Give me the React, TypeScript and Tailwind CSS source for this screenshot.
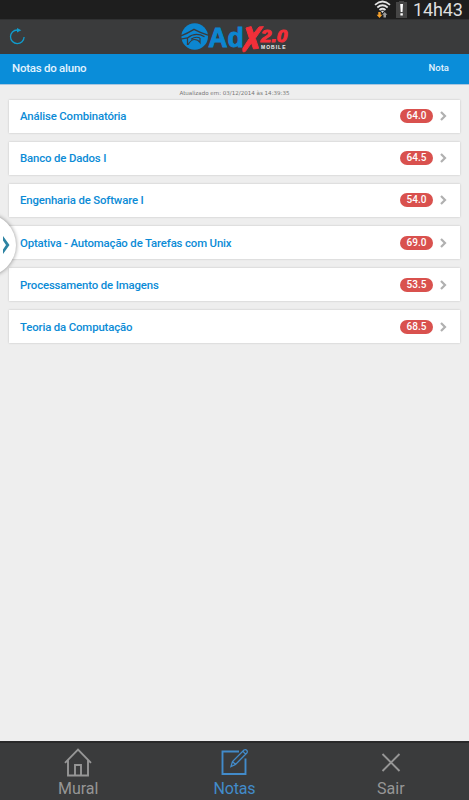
import React from "react";

const grades = [
  { name: "Análise Combinatória", grade: "64.0" },
  { name: "Banco de Dados I", grade: "64.5" },
  { name: "Engenharia de Software I", grade: "54.0" },
  { name: "Optativa - Automação de Tarefas com Unix", grade: "69.0" },
  { name: "Processamento de Imagens", grade: "53.5" },
  { name: "Teoria da Computação", grade: "68.5" },
];

function StatusBar() {
  return (
    <div className="flex h-[19px] shrink-0 items-center justify-end bg-[#1e1e1e] pr-2">
      <svg className="h-[19px] w-[18px]" viewBox="-0.500 0 18 19" fill="none">
        <path d="M1.500 4.800Q9-1.800 16.500 4.800M3.800 7.500Q9 3 14.200 7.500M6 10Q9 7.500 12 10" stroke="#e4e4e4" strokeWidth="1.700" />
        <path d="M7.300 10.800h3.400L9 13z" fill="#e4e4e4" />
        <path d="M4.800 12h2.400v2.800h1.700L6 18l-2.900-3.200h1.700z" fill="#f4a02c" />
        <path d="M10 17.500v-2.800H8.700L11.200 12l2.700 2.700h-1.400v2.800z" fill="#9a9a9a" />
      </svg>
      <svg className="ml-1 h-[19px] w-[13px]" viewBox="0 0 13 19">
        <path d="M1 2h3V1h5v1h3v16H1z" fill="#454545" />
        <path d="M5.200 4h2.800l-.5 8H5.700zM5.400 13.200h2.400v2.200H5.400z" fill="#fff" />
      </svg>
      <span className="ml-[5px] w-[48px] whitespace-nowrap text-[18px] leading-[19px] tracking-[-0.150px] text-[#dedede]">14h43</span>
    </div>
  );
}

function Logo() {
  return (
    <svg className="h-[35px] w-[112px] overflow-visible" viewBox="0 0 112 35">
      <ellipse cx="15.700" cy="16.500" rx="13.300" ry="13.200" fill="#0c86d0" />
      <path d="M2 15.800Q9 13 15 9.300q6 3.200 14 5.900" fill="none" stroke="#3a3b3c" strokeWidth="1.400" />
      <path d="M1.500 19.200l7-1.400M8.500 25v-7q8-6.500 17-1.200" fill="none" stroke="#3a3b3c" strokeWidth="1.300" />
      <path d="M9 24.800q3-5.300 6.500-5.300 3.500 0 5.500 3v-4.500M12 19.300q4.500-3.300 9-1.300" fill="none" stroke="#3a3b3c" strokeWidth="1.200" />
      <text x="29.200" y="26.800" fill="#0c86d0" stroke="#0c86d0" strokeWidth="0.900" fontFamily="Liberation Sans, sans-serif" fontWeight="700" fontSize="27" textLength="35.500" lengthAdjust="spacingAndGlyphs">Ad</text>
      <path d="M67 8l5.200-1.500 2.400 7.200 5.500-6.800 4.400-.3-8.200 11.700 3.400 10-5.200.6-2-6-6.300 8.700-2.200.2-.2-3.300 6.600-10.200z" fill="#f22f39" stroke="#f22f39" strokeLinejoin="round" />
      <text x="81.800" y="21.600" fill="#f22f39" stroke="#f22f39" strokeWidth="0.900" fontFamily="Liberation Sans, sans-serif" fontWeight="700" fontStyle="italic" fontSize="16" textLength="26.500" lengthAdjust="spacingAndGlyphs">2.0</text>
      <text x="82" y="29" fill="#eeeeee" fontFamily="Liberation Sans, sans-serif" fontWeight="700" fontSize="5" textLength="24.500">MOBILE</text>
    </svg>
  );
}

function Header() {
  return (
    <header className="grid h-[35px] shrink-0 grid-cols-[1fr_112px_1fr] items-center border-t border-[#303132] bg-[#3a3b3c]">
      <svg className="ml-2 h-[20px] w-[20px]" viewBox="0 1.500 20 20" fill="none">
        <path d="M11 3.500H9.200a6.800 6.800 0 1 0 6.900 7" stroke="#109ccc" strokeWidth="1.300" />
        <path d="M9 1.500l4.300 2.300L9 6z" fill="#109ccc" />
      </svg>
      <Logo />
    </header>
  );
}

function GradeCard({ name, grade }: { name: string; grade: string }) {
  return (
    <li className="flex h-[33px] items-center bg-white pr-[13px] pl-[11px] shadow-[0_0_2px_rgba(0,0,0,0.2)]">
      <span className="flex-1 text-[11.400px] leading-[14px] font-medium tracking-[-0.150px] whitespace-nowrap text-[#0b8bd6]">{name}</span>
      <span className="flex h-[14px] w-[33px] items-center justify-center rounded-full bg-[#d9514e] pb-px text-[10px] font-medium text-white">{grade}</span>
      <svg className="ml-[7px] h-[10px] w-[7px]" viewBox="0 0 7 10" fill="none">
        <path d="M1 1l4 4-4 4" stroke="#b0b0b0" strokeWidth="2.200" />
      </svg>
    </li>
  );
}

function DrawerHandle() {
  return (
    <div className="absolute top-[214px] -left-[46px] flex h-[62px] w-[62px] items-center justify-end rounded-full bg-white pr-[6px] shadow-[0_0_4px_rgba(0,0,0,0.45)]">
      <svg className="h-[20px] w-[8px]" viewBox="0 0 8 20">
        <path d="M1 1l6.500 9L1 19v-4.500L4 10 1 5.500z" fill="#2d83a2" />
      </svg>
    </div>
  );
}

function Footer() {
  return (
    <nav className="grid h-[59px] shrink-0 grid-cols-3 border-t-2 border-t-[#29292a] bg-[#3a3b3c] text-[16px] leading-[18px] text-[#969696]">
      <div className="flex flex-col items-center pt-[5px]">
        <svg className="h-[30px] w-[30px]" viewBox="0 0.500 30 30" fill="none" stroke="currentColor" strokeWidth="1.900">
          <path d="M2 15.300L15 2l13 13.300M5 12.500V28h20V12.500M12 28V17.500h6V28" />
        </svg>
        <span className="mt-[2px]">Mural</span>
      </div>
      <div className="flex flex-col items-center pt-[5px] text-[#428bca]">
        <svg className="h-[30px] w-[30px]" viewBox="0 0.500 30 30" fill="none" stroke="currentColor" strokeWidth="1.900">
          <path d="M20 4H3.500v22.500h23V11" />
          <path d="M12 19l1.500-5L25 2.500q1.500-1 2.700.3t.1 2.700L16.500 17zM13.500 14l3 3M23.800 3.800l2.800 2.800" strokeWidth="1.300" />
        </svg>
        <span className="mt-[2px] tracking-[-0.150px]">Notas</span>
      </div>
      <div className="flex flex-col items-center pt-[5px]">
        <svg className="h-[30px] w-[30px]" viewBox="0 0.500 30 30" fill="none">
          <path d="M6.500 6.500l17 17M23.500 6.500l-17 17" stroke="currentColor" strokeWidth="1.900" />
        </svg>
        <span className="mt-[2px]">Sair</span>
      </div>
    </nav>
  );
}

export default function App() {
  return (
    <div className="relative flex h-[800px] w-[469px] flex-col overflow-hidden bg-[#eeeeee] font-[Roboto,sans-serif]">
      <StatusBar />
      <Header />
      <div className="flex h-[31px] shrink-0 items-center justify-between border-b border-[#a9c6df] bg-[#0a8dd9] pr-[20px] pb-px pl-[12px] font-medium text-[#e2f3fe]">
        <h1 className="text-[11.500px] tracking-[-0.250px]">Notas do aluno</h1>
        <span className="text-[9.500px]">Nota</span>
      </div>
      <main className="flex-1">
        <p className="h-[14.500px] pt-[4px] text-center font-['DejaVu_Sans',sans-serif] text-[5.550px] leading-[8px] text-[#777777]">
          Atualizado em: 03/12/2014 às 14:39:35
        </p>
        <ul className="mr-[9px] ml-[9px] flex flex-col gap-[9.200px]">
          {grades.map((item) => (
            <GradeCard key={item.name} name={item.name} grade={item.grade} />
          ))}
        </ul>
      </main>
      <DrawerHandle />
      <Footer />
    </div>
  );
}
